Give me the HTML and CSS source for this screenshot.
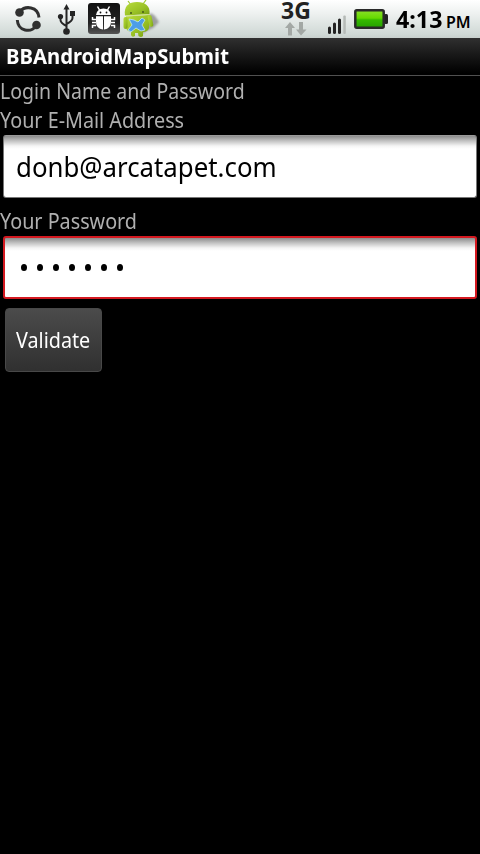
FILE: index.html
```html
<!DOCTYPE html>
<html lang="en">
<head>
<meta charset="utf-8">
<title>BBAndroidMapSubmit</title>
<link rel="stylesheet" href="styles.css">
</head>
<body>
<header class="status">
  <svg class="notifications" width="170" height="38" viewBox="0 0 170 38" aria-hidden="true">
    <defs>
      <linearGradient id="tile" x2="0" y2="1"><stop stop-color="#111"/><stop offset=".65" stop-color="#222"/><stop offset="1" stop-color="#555"/></linearGradient>
      <linearGradient id="droid" x2="1" y2="1"><stop stop-color="#b9dc3c"/><stop offset=".6" stop-color="#98c025"/><stop offset="1" stop-color="#759d14"/></linearGradient>
      <filter id="soft"><feGaussianBlur stdDeviation="1.3"/></filter>
    </defs>
    <g fill="none" stroke="#303030" stroke-width="3">
      <path d="M20 11.500C25 5.500 38 6 39 17.500"/>
      <path d="M17.300 20C18 31.500 31 33 36 26"/>
    </g>
    <circle cx="19.500" cy="12.500" r="4.300" fill="#303030"/>
    <circle cx="36.500" cy="25" r="4.300" fill="#303030"/>
    <g fill="none" stroke="#252525" stroke-width="2">
      <path d="M66.500 8V31M60.500 16V20Q60.500 23 66.500 26M72.500 14V18Q72.500 21 66.500 24"/>
    </g>
    <g fill="#252525">
      <path d="M66.500 4L69.500 9.500H63.500Z"/>
      <circle cx="60.500" cy="16.500" r="2.600"/>
      <path d="M70 11h5v5h-5z"/>
      <circle cx="66.500" cy="31.500" r="3.300"/>
    </g>
    <rect x="88" y="3" width="32" height="31" rx="3" fill="url(#tile)"/>
    <g stroke="#fff" stroke-width="1.500" fill="none">
      <path d="M97.500 6.500L99.500 10M109.500 6.500L107.500 10M96 19.500H92.500V17M96 22.500H92M96 25.500H92.500V28M111 19.500H114.500V17M111 22.500H115M111 25.500H114.500V28"/>
    </g>
    <path fill="#fff" d="M96 15Q97 8.500 103.500 8.500T111 15ZM96 16.200H103V29.500Q96 28.500 96 22ZM104 16.200H111V22Q111 28.500 104 29.500Z"/>
    <circle cx="100.500" cy="12.500" r=".9" fill="#111"/><circle cx="106.500" cy="12.500" r=".9" fill="#111"/>
    <path fill="#777" opacity=".65" filter="url(#soft)" d="M146 18L151 13L155 16L159 22L153 28L146 31L139 36L142 24Z"/>
    <path stroke="#9fc82f" stroke-width="1.200" d="M128 1L131 5M146 0L143 4"/>
    <g fill="url(#droid)">
      <path d="M125 15.500C123.500 6 129 2 137 2S150.500 6 149.500 14Z"/>
      <path d="M126 16.500L149 15V28Q148 32 143 32V36Q141 38 138.500 36L138 33H135V36Q132 38 131 35V32Q126 31 126 27Z"/>
      <rect x="123.500" y="17" width="4" height="12" rx="2"/>
      <rect x="148.500" y="15" width="4" height="12" rx="2" transform="rotate(-12 150 21)"/>
    </g>
    <path d="M126 16L149.500 14.500" stroke="#c9e368" stroke-width=".7"/>
    <circle cx="131" cy="13" r="1" fill="#45571a"/><circle cx="143" cy="12" r="1" fill="#45571a"/>
    <path fill="#4d9ee8" stroke="#c3e4f5" stroke-width=".8" d="M129 19L134 20L138 22L142 18L145 20L142 25L145 30L141 31L136 28L131 32L128 30L132 25Z"/>
  </svg>
  <div class="radio">
    <div class="network">3G</div>
    <svg width="24" height="16" viewBox="0 0 24 16" aria-hidden="true"><path fill="#a3a8a5" d="M6 1L11 7H8V14.500H4V7H1ZM17 14.500L12 8.500H15V1H19V8.500H22.500Z"/></svg>
  </div>
  <svg class="signal" width="62" height="38" viewBox="0 0 62 38" aria-hidden="true">
    <defs><linearGradient id="charge" x2="0" y2="1"><stop stop-color="#8be02a"/><stop offset=".45" stop-color="#65d900"/><stop offset=".55" stop-color="#35b900"/><stop offset="1" stop-color="#24a000"/></linearGradient></defs>
    <g fill="#222"><rect x="2" y="26.500" width="3" height="7.500" rx="1.500"/><rect x="7" y="22.500" width="3" height="11.500" rx="1.500"/><rect x="12" y="18.500" width="3" height="15.500" rx="1.500"/></g>
    <rect x="17.300" y="15.500" width="2.500" height="18.500" rx="1" fill="#b5bab7"/>
    <rect x="58" y="14" width="4" height="10" rx="1.500" fill="#222"/>
    <rect x="29.300" y="10.300" width="28.400" height="17.400" rx="1.500" fill="url(#charge)" stroke="#292929" stroke-width="2.500"/>
  </svg>
  <div class="clock"><span class="time">4:13</span><span class="meridiem">PM</span></div>
</header>
<h1 class="title"><span class="title-text">BBAndroidMapSubmit</span></h1>
<main class="form">
  <div class="label"><span class="login-text">Login Name and Password</span></div>
  <div class="label"><span class="email-text">Your E-Mail Address</span></div>
  <div class="field"><span class="value">donb@arcatapet.com</span></div>
  <div class="label password-label"><span class="password-text">Your Password</span></div>
  <div class="field focused"><span class="dots"><i></i><i></i><i></i><i></i><i></i><i></i><i></i></span></div>
  <div class="button"><span class="button-text">Validate</span></div>
</main>
</body>
</html>
```
FILE: styles.css
```css
* { box-sizing: border-box; }
body {
  margin: 0;
  min-height: 854px;
  background: #000;
  font-family: "Noto Sans", "Open Sans", sans-serif;
  overflow: hidden;
}
span { white-space: nowrap; }
.status {
  display: flex;
  height: 38px;
  background: linear-gradient(#fff, #eef1f0 35%, #d0d9d6 90%, #c8d0cd);
  color: #222;
}
.notifications { flex: none; }
.radio {
  width: 42px;
  margin-left: 105px;
  display: flex;
  flex-direction: column;
  align-items: center;
}
.network {
  height: 21px;
  line-height: 21px;
  font-size: 23px;
  font-weight: 700;
}
.signal { margin-left: 9px; flex: none; }
.clock {
  margin-left: 8px;
  display: flex;
  align-items: baseline;
  line-height: 38px;
  color: #000;
  font-weight: 700;
}
.time { width: 50px; font-size: 24px; transform: scaleX(.97); transform-origin: left; }
.meridiem { font-size: 16px; font-weight: 600; transform: scaleX(1); transform-origin: left; }
.title {
  height: 38px;
  margin: 0;
  padding-left: 6px;
  border-bottom: 1px solid #505050;
  background: linear-gradient(#303030, #1b1b1b 40%, #000 95%);
  color: #fff;
  font-size: 21px;
  line-height: 37px;
}
.form { padding-top: 1px; }
.title-text, .label span, .value, .button-text {
  display: inline-block;
  transform-origin: left;
}
.title-text { transform: scaleX(.965); }
.label .login-text { transform: scaleX(.887); }
.label .email-text, .label .password-text, .button-text { transform: scaleX(.898); }
.value { transform: scaleX(.922); }
.label {
  height: 29px;
  color: #b0b0b0;
  font-size: 22px;
  line-height: 27px;
}
.field {
  height: 63px;
  margin: 0 3px;
  padding-left: 12px;
  border: 1px solid #777;
  border-top-color: #999;
  border-radius: 3px;
  background: linear-gradient(#8c8c8c, #c3c3c3 5px, #f5f5f5 10px, #fff 13px);
  color: #000;
  font-size: 28px;
  line-height: 61px;
}
.password-label { margin-top: 9px; }
.focused { border: 2px solid #d41920; }
.dots { display: flex; gap: 10px; padding: 26px 0 0 4px; }
.dots i { width: 6px; height: 7px; border-radius: 50%; background: #000; }
.button {
  width: 97px;
  height: 64px;
  margin: 9px 0 0 5px;
  padding-left: 10px;
  border: 1px solid #484848;
  border-radius: 4px;
  background: linear-gradient(#4b4b4b, #303030);
  color: #fff;
  font-size: 22px;
  line-height: 60px;
}
```
